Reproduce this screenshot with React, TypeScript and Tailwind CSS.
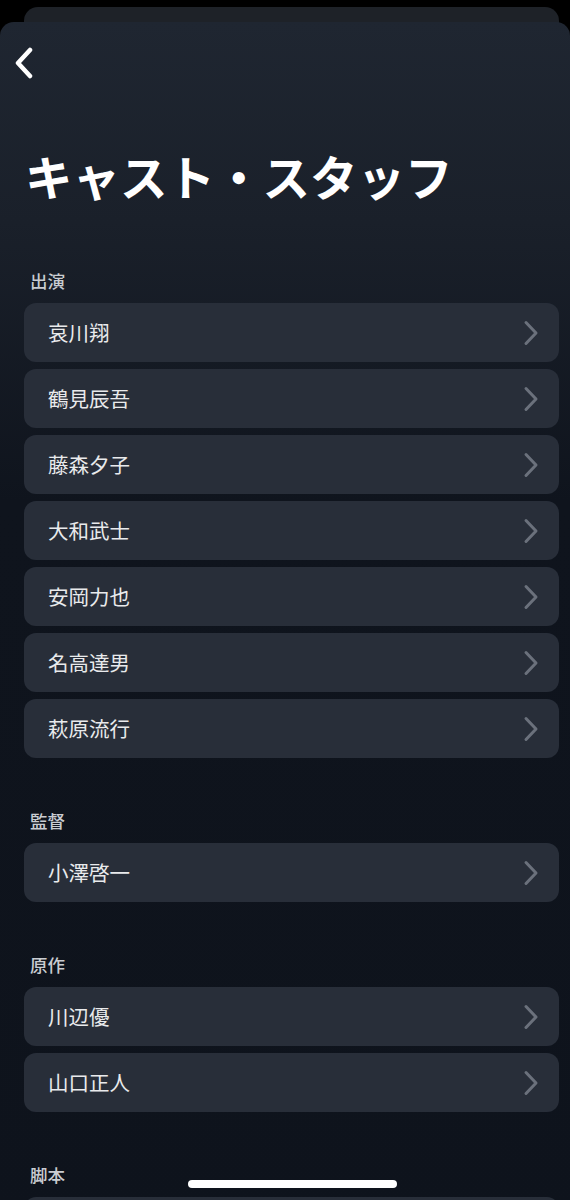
import React from 'react';

type Section = { label: string; names: string[] };

const sections: Section[] = [
  { label: '出演', names: ['哀川翔', '鶴見辰吾', '藤森夕子', '大和武士', '安岡力也', '名高達男', '萩原流行'] },
  { label: '監督', names: ['小澤啓一'] },
  { label: '原作', names: ['川辺優', '山口正人'] },
  { label: '脚本', names: ['大川俊道'] },
];

const font = { fontFamily: '"Noto Sans CJK JP", "Noto Sans", sans-serif' };

const ChevronRight = () => (
  <svg width="16" height="26" viewBox="0 0 16 26" fill="none">
    <path d="M3 2.5 L13 13 L3 23.5" stroke="#6b717c" strokeWidth="3" strokeLinecap="round" strokeLinejoin="round" />
  </svg>
);

const PersonRow: React.FC<{ name: string }> = ({ name }) => (
  <div className="flex h-[59px] items-center justify-between rounded-[12px] bg-[#282e39] pl-6 pr-[20px]">
    <span className="text-[20.5px] text-[#e9eaec]">{name}</span>
    <ChevronRight />
  </div>
);

const App: React.FC = () => {
  return (
    <div className="relative min-h-[1200px] overflow-hidden bg-black" style={font}>
      {/* card stacked behind the sheet */}
      <div className="absolute left-6 right-[11px] top-[7px] h-10 rounded-t-[14px] bg-[#1e2228]" />

      <div className="relative mt-[22px] min-h-[1178px] rounded-t-[14px] bg-[linear-gradient(180deg,#1f2631_0px,#1a202a_200px,#0f141d_480px,#0e131c_100%)]">
        <div className="flex h-[82px] items-center pl-[14px]">
          <svg width="20" height="32" viewBox="0 0 20 32" fill="none">
            <path d="M16 3 L4 16 L16 29" stroke="#ffffff" strokeWidth="4.5" strokeLinecap="round" strokeLinejoin="round" />
          </svg>
        </div>

        <h1 className="mt-[44px] pl-[25px] text-[47.5px] font-bold leading-[56px] text-white">キャスト・スタッフ</h1>

        <div className="mt-[65px] pl-6 pr-[11px]">
          {sections.map((s, i) => (
            <div key={s.label} className={i === 0 ? '' : 'mt-[51px]'}>
              <div className="mb-[10px] pl-[6px] text-[17.5px] font-medium leading-6 text-[#c9ccd1]">{s.label}</div>
              <div className="flex flex-col gap-[7px]">
                {s.names.map((n) => (
                  <PersonRow key={n} name={n} />
                ))}
              </div>
            </div>
          ))}
        </div>
      </div>

      {/* home indicator */}
      <div className="fixed left-[188px] top-[1180px] h-[8px] w-[209px] rounded-full bg-white" />
    </div>
  );
};

export default App;
